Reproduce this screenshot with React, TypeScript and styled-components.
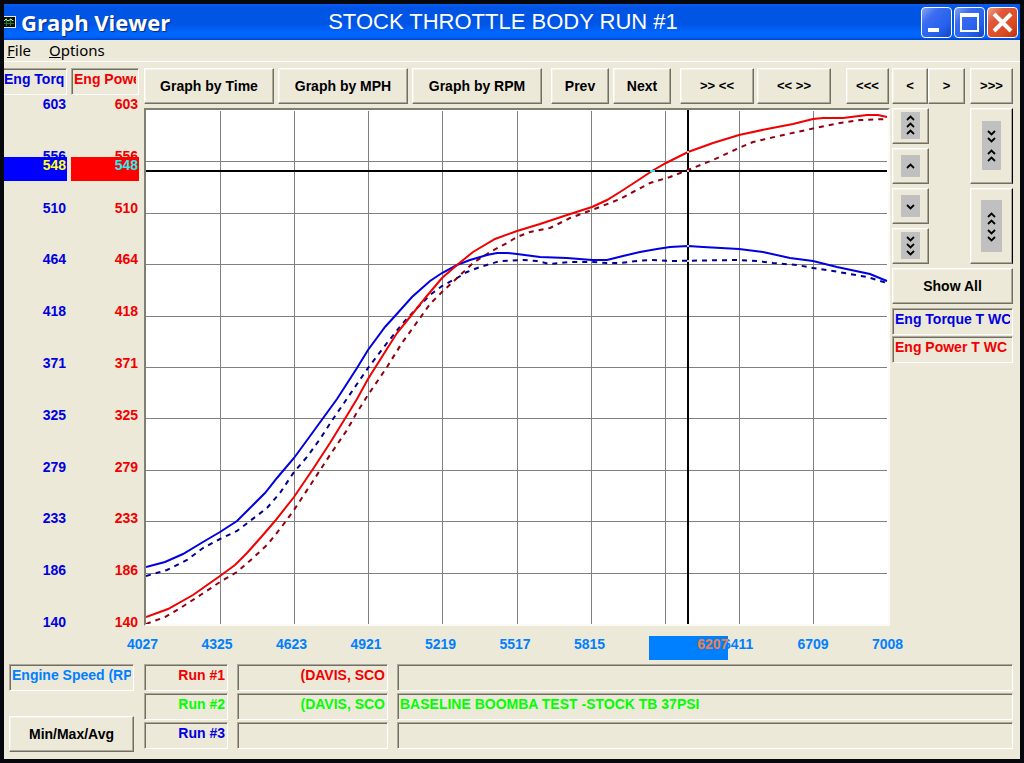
import React from 'react';
import styled, { createGlobalStyle } from 'styled-components';

const GlobalStyle = createGlobalStyle`
  * { box-sizing: border-box; }
  body {
    margin: 0;
    background: #05080c;
    font-family: "Liberation Sans", Arial, sans-serif;
    font-size: 14px;
    color: #000;
  }
  button { font: inherit; color: inherit; }
`;

const FACE = '#ece9d8';
const BLUE = '#0000e0';
const RED = '#f00000';
const GREEN = '#00ff00';
const SKY = '#0080ff';

const Window = styled.div`
  display: flex;
  flex-direction: column;
  min-height: 100vh;
  border: 4px solid #05080c;
  background: ${FACE};
`;

const TitleBar = styled.header`
  display: grid;
  grid-template-columns: 1fr auto 1fr;
  align-items: center;
  height: 36px;
  padding-right: 2px;
  color: #fff;
  background: linear-gradient(#0a5cf0 0, #0054e3 12%, #0055e5 55%, #0066ff 80%, #0064fa 92%, #0043cf 100%);
`;

const AppName = styled.div`
  display: flex;
  align-items: center;
  gap: 5px;
  font: bold 22px/36px "Open Sans", "Noto Sans", sans-serif;
  text-shadow: 1px 1px 1px #0a2a80;
`;

const RunTitle = styled.h1`
  margin: 0;
  padding-right: 16px;
  font-size: 22px;
  font-weight: normal;
  line-height: 36px;
  white-space: nowrap;
`;

const WindowControls = styled.div`
  display: flex;
  justify-content: flex-end;
  gap: 2px;
`;

const ControlButton = styled.button<{ $close?: boolean }>`
  width: 31px;
  height: 31px;
  padding: 0;
  border: 1px solid #fff;
  border-radius: 4px;
  background: ${p => p.$close
    ? 'linear-gradient(135deg, #f0a088 0, #e0583a 30%, #dc4a22 70%, #b83410 100%)'
    : 'linear-gradient(135deg, #86a6f4 0, #3c6cf0 30%, #2460ee 70%, #1644c0 100%)'};
  svg { display: block; }
`;

const MenuBar = styled.nav`
  display: flex;
  align-items: flex-start;
  gap: 18px;
  height: 22px;
  padding-left: 3px;
  border-bottom: 1px solid #fff;
`;

const MenuItem = styled.button`
  padding: 0;
  border: 0;
  background: none;
  font: 15px/20px "Noto Sans", sans-serif;
  &::first-letter { text-decoration: underline; }
`;

const Main = styled.main`
  display: flex;
  flex: 1;
  gap: 5px;
  padding: 6px 7px 4px 0;
`;

const Scales = styled.div`
  display: flex;
  gap: 4px;
  padding-bottom: 30px;
`;

const Scale = styled.section<{ $wide?: boolean }>`
  display: flex;
  flex-direction: column;
  width: ${p => (p.$wide ? 68 : 63)}px;
`;

const Sunken = styled.div<{ $color?: string; $end?: boolean; $flush?: boolean }>`
  height: 27px;
  padding: 0 2px 0 ${p => (p.$flush ? 0 : 2)}px;
  border: 1px solid;
  border-color: #aca899 #fff #fff #aca899;
  border-left-width: ${p => (p.$flush ? 0 : 1)}px;
  box-shadow: inset ${p => (p.$flush ? 0 : 1)}px 1px #716f64;
  color: ${p => p.$color || '#000'};
  font-weight: bold;
  line-height: 21px;
  text-align: ${p => (p.$end ? 'right' : 'left')};
  span {
    display: block;
    overflow: hidden;
    white-space: nowrap;
  }
`;

const ScaleTrack = styled.div<{ $color: string }>`
  position: relative;
  display: flex;
  flex: 1;
  flex-direction: column;
  justify-content: space-between;
  margin-top: 1px;
  padding-right: 1px;
  color: ${p => p.$color};
  font-weight: bold;
  line-height: 16px;
  text-align: right;
`;

const ScaleCursor = styled.output<{ $bg: string; $color: string }>`
  position: absolute;
  top: 11.5%;
  left: 0;
  right: 0;
  height: 24px;
  padding-right: 1px;
  background: ${p => p.$bg};
  color: ${p => p.$color};
  line-height: 17px;
`;

const Center = styled.div`
  display: flex;
  flex: 1;
  flex-direction: column;
  gap: 4px;
  min-width: 0;
`;

const SplitRow = styled.div<{ $grow?: boolean }>`
  display: flex;
  flex: ${p => (p.$grow ? 1 : 'none')};
  gap: 2px;
`;

const Toolbar = styled.div`
  display: flex;
  flex: 1;
  gap: 9px;
  padding-right: 1px;
  > :last-child { margin-left: auto; }
`;

const Group = styled.div<{ $gap?: number }>`
  display: flex;
  gap: ${p => p.$gap ?? 4}px;
`;

const SideToolbar = styled.div`
  display: flex;
  justify-content: space-between;
  width: 121px;
`;

const Push = styled.button<{ $w?: string; $h?: number; $small?: boolean; $dark?: boolean }>`
  display: flex;
  align-items: center;
  justify-content: center;
  width: ${p => p.$w || 'auto'};
  height: ${p => p.$h || 36}px;
  padding: 0 0 1px;
  border: 1px solid;
  border-color: #fff ${p => (p.$dark ? '#000' : '#716f64')} #716f64 #fff;
  box-shadow: inset -1px -1px #aca899, inset 1px 1px #f4f2e8;
  background: ${FACE};
  font-size: ${p => (p.$small ? 13 : 14)}px;
  font-weight: bold;
  white-space: nowrap;
`;

const PlotColumn = styled.div`
  display: flex;
  flex: 1;
  flex-direction: column;
  gap: 10px;
  min-width: 0;
`;

const PlotFrame = styled.div`
  display: flex;
  flex: 1;
  min-height: 320px;
  border: 2px solid;
  border-color: #817f73 #fbfaf4 #fbfaf4 #817f73;
  background: #fff;
`;

const Plot = styled.svg`
  flex: 1;
  width: 0;
  min-width: 100%;
  height: auto;
  path, line { vector-effect: non-scaling-stroke; }
`;

const XAxis = styled.div`
  position: relative;
  display: flex;
  justify-content: space-between;
  height: 24px;
  margin: 0 -13px 0 -17px;
  color: ${SKY};
  font-weight: bold;
  line-height: 16px;
`;

const XTick = styled.span`
  width: 31px;
`;

const XCursor = styled.output`
  position: absolute;
  top: 0;
  right: 22.5%;
  width: 79px;
  height: 24px;
  background: ${SKY};
  color: #f08040;
  text-align: right;
`;

const SidePane = styled.aside`
  display: flex;
  flex-direction: column;
  gap: 4px;
  width: 121px;
`;

const ZoomPad = styled.div`
  display: flex;
  justify-content: space-between;
`;

const ButtonStack = styled.div`
  display: flex;
  flex-direction: column;
  gap: 4px;
`;

const Legend = styled.div`
  display: flex;
  flex-direction: column;
  gap: 1px;
`;

const Footer = styled.footer`
  display: grid;
  grid-template-columns: 125px 1fr;
  gap: 10px;
  padding: 0 7px 7px 5px;
`;

const FooterLeft = styled.div`
  display: flex;
  flex-direction: column;
  gap: 25px;
`;

const Runs = styled.div`
  display: grid;
  grid-template-columns: 84px 151px 1fr;
  align-content: start;
  gap: 2px 9px;
`;

type Dir = 'u' | 'd';

function Chevrons({ w = 19, h, marks }: { w?: number; h: number; marks: [Dir, number][] }) {
  const x = Math.floor(w / 2) + 0.5;
  return (
    <svg width={w} height={h} viewBox={`0 0 ${w} ${h}`} aria-hidden="true">
      <rect width={w} height={h} fill="#c0c0c0" />
      {marks.map(([dir, y]) => (
        <path
          key={y}
          d={dir === 'u'
            ? `M${x - 3.5} ${y + 2}L${x} ${y - 1.5}L${x + 3.5} ${y + 2}`
            : `M${x - 3.5} ${y - 2}L${x} ${y + 1.5}L${x + 3.5} ${y - 2}`}
          fill="none"
          stroke="#000"
          strokeWidth="1.8"
        />
      ))}
    </svg>
  );
}

const verticals = [220.5, 294.5, 368.5, 442.5, 517.5, 591.5, 665.5, 739.5, 813.5];
const horizontals = [161.5, 213.5, 264.5, 316.5, 367.5, 418.5, 470.5, 521.5, 573.5];

const powerRun1 = 'M146 617L168 609L193 595L220 576L235 565L247 553L263 535L275 521L294 497L313 469L330 443L346 417L357 399L368 379L385 352L397 333L410 317L426 297L442 278L457 265L473 252L495 239L517 231L540 224L567 215L592 207L607 200L620 192L637 181L652 171L666 163L688 152L713 143L739 135L767 129L793 124L813 119L823 118L843 118L867 115L878 115L887 117';
const powerRun2 = 'M146 624L165 617L182 607L202 594L220 582L237 572L253 558L268 544L283 525L294 510L313 481L330 455L347 430L356 414L368 395L387 367L402 343L420 318L430 304L442 292L455 280L473 263L490 252L507 243L517 237L530 232L550 228L570 218L592 210L620 199L633 192L650 183L670 177L688 170L713 160L739 148L753 142L770 138L797 132L820 127L840 123L860 120L887 119';
const torqueRun1 = 'M146 567L165 562L183 554L203 542L220 532L237 521L247 511L265 493L277 478L294 458L313 432L337 399L357 368L368 350L385 327L395 316L412 297L430 281L442 273L457 265L470 260L487 255L497 253L507 253L517 254L540 257L567 258L592 260L607 260L623 256L640 252L657 249L670 247L688 246L703 247L739 249L763 252L790 258L813 261L837 267L870 274L882 279L887 281';
const torqueRun2 = 'M146 576L167 570L187 560L203 548L220 539L237 531L250 521L267 508L280 493L294 472L307 457L320 439L333 419L344 403L357 384L368 368L387 343L403 323L417 308L430 295L442 286L457 278L467 272L480 267L500 261L523 260L537 261L550 264L570 262L592 262L607 263L620 263L637 261L650 260L670 261L737 260L757 261L773 263L797 265L813 268L833 271L867 277L877 280L887 283';

const scaleTicks = ['603', '556', '510', '464', '418', '371', '325', '279', '233', '186', '140'];
const xTicks = ['4027', '4325', '4623', '4921', '5219', '5517', '5815', '', '6411', '6709', '7008'];

const runs = [
  { name: 'Run #1', owner: '(DAVIS, SCO', note: '', color: RED },
  { name: 'Run #2', owner: '(DAVIS, SCO', note: 'BASELINE BOOMBA TEST -STOCK TB 37PSI', color: GREEN },
  { name: 'Run #3', owner: '', note: '', color: BLUE },
];

export default function App() {
  return (
    <>
      <GlobalStyle />
      <Window>
        <TitleBar>
          <AppName>
            <svg width="12" height="12" viewBox="0 0 12 12" aria-hidden="true">
              <rect width="12" height="12" fill="#e8e8e0" />
              <rect width="11" height="10" y="1" fill="#081008" />
              <path d="M0 4.5H10M0 7.5H10M2.5 2V10M6.5 2V10" stroke="#1c7a34" />
              <path d="M0 5L2 3L4 5L7 3L9 5" stroke="#c8e0c8" fill="none" />
            </svg>
            Graph Viewer
          </AppName>
          <RunTitle>STOCK THROTTLE BODY RUN #1</RunTitle>
          <WindowControls>
            <ControlButton aria-label="Minimize">
              <svg width="29" height="29" viewBox="0 0 29 29"><rect x="6" y="20" width="11" height="4" fill="#fff" /></svg>
            </ControlButton>
            <ControlButton aria-label="Maximize">
              <svg width="29" height="29" viewBox="0 0 29 29"><path d="M5 5H24V24H5ZM7 9V22H22V9Z" fill="#fff" fillRule="evenodd" /></svg>
            </ControlButton>
            <ControlButton aria-label="Close" $close>
              <svg width="29" height="29" viewBox="0 0 29 29"><path d="M6 6L23 23M23 6L6 23" stroke="#fff" strokeWidth="4" /></svg>
            </ControlButton>
          </WindowControls>
        </TitleBar>

        <MenuBar>
          <MenuItem>File</MenuItem>
          <MenuItem>Options</MenuItem>
        </MenuBar>

        <Main>
          <Scales>
            <Scale>
              <Sunken $color={BLUE} $flush><span>Eng Torq</span></Sunken>
              <ScaleTrack $color={BLUE}>
                {scaleTicks.map(t => <span key={t}>{t}</span>)}
                <ScaleCursor $bg="#0000ff" $color="#ffff20">548</ScaleCursor>
              </ScaleTrack>
            </Scale>
            <Scale $wide>
              <Sunken $color={RED}><span>Eng Power</span></Sunken>
              <ScaleTrack $color={RED}>
                {scaleTicks.map(t => <span key={t}>{t}</span>)}
                <ScaleCursor $bg="#ff0000" $color="#20f0f0">548</ScaleCursor>
              </ScaleTrack>
            </Scale>
          </Scales>

          <Center>
            <SplitRow>
              <Toolbar>
                <Group>
                  <Push $w="130px">Graph by Time</Push>
                  <Push $w="130px">Graph by MPH</Push>
                  <Push $w="130px">Graph by RPM</Push>
                </Group>
                <Group>
                  <Push $w="58px">Prev</Push>
                  <Push $w="58px">Next</Push>
                </Group>
                <Group $gap={3}>
                  <Push $w="74px" $small>{'>> <<'}</Push>
                  <Push $w="74px" $small>{'<< >>'}</Push>
                </Group>
                <Push $w="43px" $small>{'<<<'}</Push>
              </Toolbar>
              <SideToolbar>
                <Group $gap={0}>
                  <Push $w="36px" $small>{'<'}</Push>
                  <Push $w="37px" $small>{'>'}</Push>
                </Group>
                <Push $w="43px" $small>{'>>>'}</Push>
              </SideToolbar>
            </SplitRow>

            <SplitRow $grow>
              <PlotColumn>
                <PlotFrame>
                  <Plot viewBox="146 110 742 514" preserveAspectRatio="none" role="img" aria-label="Engine torque and power by engine speed">
                    <g stroke="#808080" shapeRendering="crispEdges">
                      {horizontals.map(y => <line key={y} x1="146" x2="887" y1={y} y2={y} />)}
                      {verticals.map(x => <line key={x} x1={x} x2={x} y1="111" y2="624" />)}
                    </g>
                    <g stroke="#000" strokeWidth="2" shapeRendering="crispEdges">
                      <line x1="146" x2="887" y1="171" y2="171" />
                      <line x1="688" x2="688" y1="110" y2="624" />
                    </g>
                    <g fill="none" strokeWidth="2">
                      <path d={torqueRun2} stroke="#000090" strokeDasharray="5 5" />
                      <path d={powerRun2} stroke="#900010" strokeDasharray="5 5" />
                      <path d={torqueRun1} stroke={BLUE} />
                      <path d={powerRun1} stroke={RED} />
                    </g>
                    <rect x="650" y="170" width="5" height="2" fill="#20e8f0" />
                    <g fill="#b8d0c0">
                      <rect x="687" y="151" width="2" height="2" />
                      <rect x="687" y="170" width="2" height="2" />
                      <rect x="687" y="245" width="2" height="2" />
                      <rect x="687" y="260" width="2" height="2" />
                    </g>
                  </Plot>
                </PlotFrame>
                <XAxis>
                  {xTicks.map((t, i) => <XTick key={i}>{t}</XTick>)}
                  <XCursor>6207</XCursor>
                </XAxis>
              </PlotColumn>

              <SidePane>
                <ZoomPad>
                  <ButtonStack>
                    <Push $w="37px" aria-label="Scroll up fast"><Chevrons h={27} marks={[['u', 6], ['u', 13], ['u', 20]]} /></Push>
                    <Push $w="37px" aria-label="Scroll up"><Chevrons h={22} marks={[['u', 11]]} /></Push>
                    <Push $w="37px" aria-label="Scroll down"><Chevrons h={22} marks={[['d', 12]]} /></Push>
                    <Push $w="37px" aria-label="Scroll down fast"><Chevrons h={27} marks={[['d', 7], ['d', 14], ['d', 21]]} /></Push>
                  </ButtonStack>
                  <ButtonStack>
                    <Push $w="43px" $h={76} $dark aria-label="Compress scale"><Chevrons h={49} marks={[['d', 12], ['d', 19], ['u', 31], ['u', 38]]} /></Push>
                    <Push $w="43px" $h={76} $dark aria-label="Expand scale"><Chevrons w={21} h={52} marks={[['u', 15], ['u', 22], ['d', 32], ['d', 39]]} /></Push>
                  </ButtonStack>
                </ZoomPad>
                <Push $w="100%">Show All</Push>
                <Legend>
                  <Sunken $color={BLUE}><span>Eng Torque T WC</span></Sunken>
                  <Sunken $color={RED}><span>Eng Power T WC</span></Sunken>
                </Legend>
              </SidePane>
            </SplitRow>
          </Center>
        </Main>

        <Footer>
          <FooterLeft>
            <Sunken $color={SKY}><span>Engine Speed (RPM)</span></Sunken>
            <Push $w="100%">Min/Max/Avg</Push>
          </FooterLeft>
          <Runs>
            {runs.map(r => (
              <React.Fragment key={r.name}>
                <Sunken $color={r.color} $end><span>{r.name}</span></Sunken>
                <Sunken $color={r.color} $end><span>{r.owner}</span></Sunken>
                <Sunken $color={r.color}><span>{r.note}</span></Sunken>
              </React.Fragment>
            ))}
          </Runs>
        </Footer>
      </Window>
    </>
  );
}
